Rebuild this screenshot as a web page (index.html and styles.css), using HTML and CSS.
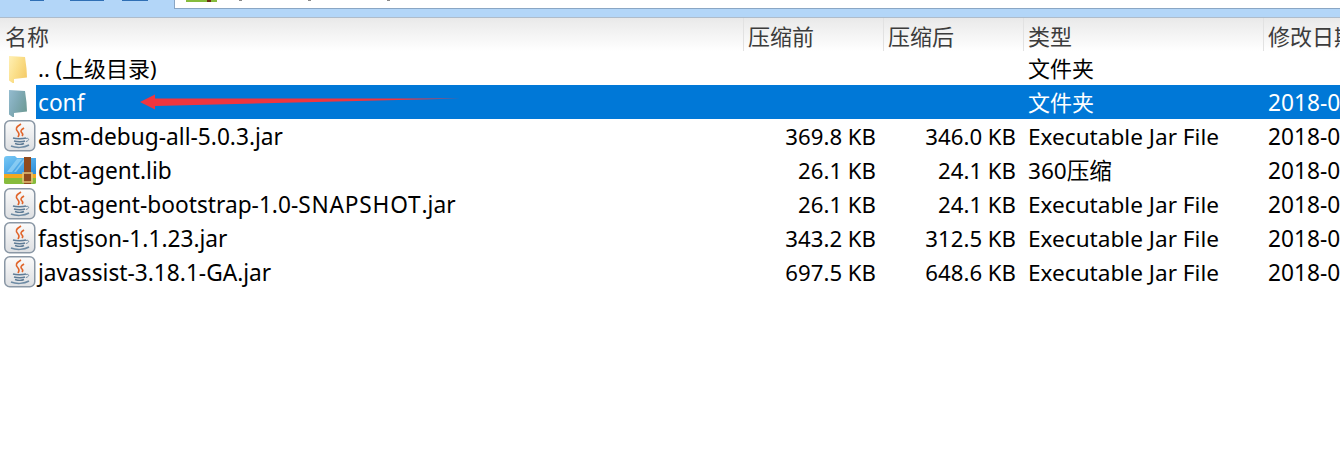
FILE: index.html
```html
<!DOCTYPE html>
<html lang="zh">
<head>
    <meta charset="UTF-8">
    <title>文件列表</title>
    <link rel="stylesheet" href="styles.css">
</head>
<body>
    <svg class="defs" width="0" height="0">
        <defs>
            <linearGradient id="folder-yellow" x1="0" y1="0" x2="1" y2="0.6">
                <stop offset="0" stop-color="#fff0b5"/>
                <stop offset="0.5" stop-color="#fbe08c"/>
                <stop offset="1" stop-color="#f5cd6c"/>
            </linearGradient>
            <linearGradient id="folder-teal" x1="0" y1="0" x2="1" y2="0.6">
                <stop offset="0" stop-color="#94bcd0"/>
                <stop offset="0.5" stop-color="#80aab6"/>
                <stop offset="1" stop-color="#6f9c98"/>
            </linearGradient>
            <linearGradient id="jar-bg" x1="0" y1="0" x2="0" y2="1">
                <stop offset="0" stop-color="#fbfbfb"/>
                <stop offset="1" stop-color="#dddfe2"/>
            </linearGradient>
            <linearGradient id="zip-blue" x1="0" y1="0" x2="1" y2="1">
                <stop offset="0" stop-color="#77c8f5"/>
                <stop offset="1" stop-color="#2b8ddb"/>
            </linearGradient>
            <symbol id="jar" viewBox="0 0 32 32">
                <rect x="0.75" y="0.75" width="30" height="30" rx="5" fill="url(#jar-bg)" stroke="#8a97a5" stroke-width="1.5"/>
                <path d="M17 4c-5 3-6 5-3 8 2 2 1 3 0 5M20 8c-3 2-4 3-2 5 1 1 1 2 0 3" fill="none" stroke="#e0642a" stroke-width="1.6"/>
                <path d="M9 18c3 1 10 1 13 0M10 21c3 1 9 1 11 0M11 23.500c3 1 7 1 9 0" fill="none" stroke="#5f7c96" stroke-width="1.4"/>
                <path d="M7 26c5 2 13 2 18-1" fill="none" stroke="#6d8aa3" stroke-width="1.500"/>
                <path d="M22 18.500c3-1 4 2 0 3" fill="none" stroke="#6d8aa3" stroke-width="1"/>
            </symbol>
            <symbol id="folder" viewBox="0 0 18 27">
                <path d="M0 0l16 1 1.500 11.500.5 9-13 1.500v5l-5-3.500z"/>
            </symbol>
        </defs>
    </svg>

    <div class="toolbar">
        <div class="toolbar-tools">
            <span class="tool tool-a"></span>
            <span class="tool tool-b"></span>
            <span class="tool tool-c"></span>
        </div>
        <div class="path-box">
            <span class="path-icon"></span>
            <span class="path-mark mark-a"></span>
            <span class="path-mark mark-b"></span>
            <span class="path-mark mark-c"></span>
        </div>
    </div>

    <div class="file-list">
        <div class="row head">
            <div class="cell">名称</div>
            <div class="cell">压缩前</div>
            <div class="cell">压缩后</div>
            <div class="cell">类型</div>
            <div class="cell">修改日期</div>
        </div>

        <div class="row">
            <div class="cell name">
                <svg class="icon-folder" fill="url(#folder-yellow)"><use href="#folder"/></svg>
                <span class="label parent">.. (上级目录)</span>
            </div>
            <div class="cell"></div>
            <div class="cell"></div>
            <div class="cell type cjk">文件夹</div>
            <div class="cell date"></div>
        </div>

        <div class="row selected">
            <div class="cell name">
                <svg class="icon-folder" fill="url(#folder-teal)"><use href="#folder"/></svg>
                <span class="label">conf</span>
                <svg class="arrow" width="322" height="18" viewBox="0 0 322 18">
                    <path d="M0 9L15 1.500v4L320 5.500 15 13v3.500z" fill="#f0353f"/>
                </svg>
            </div>
            <div class="cell"></div>
            <div class="cell"></div>
            <div class="cell type cjk">文件夹</div>
            <div class="cell date">2018-06-12</div>
        </div>

        <div class="row">
            <div class="cell name">
                <svg class="icon"><use href="#jar"/></svg>
                <span class="label">asm-debug-all-5.0.3.jar</span>
            </div>
            <div class="cell size">369.8 KB</div>
            <div class="cell size">346.0 KB</div>
            <div class="cell type">Executable Jar File</div>
            <div class="cell date">2018-06-12</div>
        </div>

        <div class="row">
            <div class="cell name">
                <svg class="icon" viewBox="0 0 32 32">
                    <path d="M0 5q0-3 3-3h8l2 2h19v16H0z" fill="url(#zip-blue)"/>
                    <path d="M3 18L13 5h5L8 18zM10 18L20 5h2L12 18z" fill="#a5dcf8" opacity="0.6"/>
                    <rect y="20" width="32" height="4" fill="#f3a81f"/>
                    <path d="M0 24h32v5q0 1-2 1H2q-2 0-2-1z" fill="#86bb3c"/>
                    <rect x="20" y="3" width="7" height="27" fill="#8f4a1e"/>
                    <rect x="19" y="19" width="9" height="9" fill="none" stroke="#e3c27a" stroke-width="1.500"/>
                </svg>
                <span class="label">cbt-agent.lib</span>
            </div>
            <div class="cell size">26.1 KB</div>
            <div class="cell size">24.1 KB</div>
            <div class="cell type">360压缩</div>
            <div class="cell date">2018-06-12</div>
        </div>

        <div class="row">
            <div class="cell name">
                <svg class="icon"><use href="#jar"/></svg>
                <span class="label">cbt-agent-bootstrap-1.0-<span class="caps">SNAPSHOT</span>.jar</span>
            </div>
            <div class="cell size">26.1 KB</div>
            <div class="cell size">24.1 KB</div>
            <div class="cell type">Executable Jar File</div>
            <div class="cell date">2018-06-12</div>
        </div>

        <div class="row">
            <div class="cell name">
                <svg class="icon"><use href="#jar"/></svg>
                <span class="label">fastjson-1.1.23.jar</span>
            </div>
            <div class="cell size">343.2 KB</div>
            <div class="cell size">312.5 KB</div>
            <div class="cell type">Executable Jar File</div>
            <div class="cell date">2018-06-12</div>
        </div>

        <div class="row">
            <div class="cell name">
                <svg class="icon"><use href="#jar"/></svg>
                <span class="label">javassist-3.18.1-GA.jar</span>
            </div>
            <div class="cell size">697.5 KB</div>
            <div class="cell size">648.6 KB</div>
            <div class="cell type">Executable Jar File</div>
            <div class="cell date">2018-06-12</div>
        </div>
    </div>
</body>
</html>
```

FILE: styles.css
```css
html, body {
    margin: 0;
    padding: 0;
    background: #fff;
    overflow: hidden;
}

body {
    font-family: "Noto Sans", "Noto Sans CJK SC", sans-serif;
    font-size: 22px;
    color: #000;
    width: 1340px;
    height: 452px;
}

.defs {
    position: absolute;
}

.toolbar {
    display: flex;
    height: 18px;
    background: #b3d6f8;
    border-bottom: 1px solid #aebccb;
    box-sizing: border-box;
}

.toolbar-tools {
    width: 174px;
    display: flex;
    align-items: flex-start;
    box-sizing: border-box;
    padding-left: 30px;
}

.tool {
    height: 1px;
    background: #2f6fb5;
}

.tool-a { width: 14px; margin-right: 26px; }
.tool-b { width: 34px; margin-right: 18px; }
.tool-c { width: 26px; }

.path-box {
    flex: 1;
    display: flex;
    align-items: flex-start;
    height: 8px;
    background: #fff;
    border: 1px solid #8aa6c4;
    border-top: 0;
    border-right: 0;
    padding-left: 11px;
}

.path-icon {
    width: 31px;
    height: 2px;
    background: linear-gradient(to right, #86bb3c 68%, #6b2d10 68%, #6b2d10 80%, #86bb3c 80%);
}

.path-mark {
    width: 3px;
    height: 1px;
    background: #8a8a8a;
}

.mark-a { margin-left: 22px; }
.mark-b { margin-left: 66px; }
.mark-c { margin-left: 76px; }

.row {
    display: grid;
    grid-template-columns: 743px 140px 140px 240px 1fr;
    height: 34px;
    line-height: 36px;
}

.head {
    height: 33px;
    line-height: 37px;
    color: #3c3c3c;
    background: linear-gradient(#e9e9e9, #fff);
}

.head .cell {
    padding-left: 4px;
    border-left: 1px solid #e2e2e2;
    box-sizing: border-box;
}

.head .cell:first-child {
    padding-left: 5px;
    border-left: 0;
}

.cell {
    white-space: nowrap;
    overflow: hidden;
    min-width: 0;
}

.name {
    display: flex;
    align-items: center;
    position: relative;
    padding-left: 4px;
    overflow: visible;
}

.icon {
    width: 32px;
    height: 32px;
    flex: none;
}

.icon-folder {
    width: 18px;
    height: 27px;
    margin: 3px 9px 0 5px;
    flex: none;
}

.label {
    font-size: 22.7px;
    height: 34px;
    flex: 1;
    padding-left: 2px;
}

.label.parent {
    font-size: 22px;
    line-height: 34px;
}

.caps {
    letter-spacing: 0.8px;
}

.size {
    font-size: 22.2px;
    text-align: right;
    padding-right: 7px;
}

.type {
    font-size: 22.6px;
    padding-left: 5px;
}

.type.cjk {
    font-size: 22px;
    line-height: 34px;
}

.date {
    font-size: 22.7px;
    padding-left: 5px;
}

.selected .cell {
    background: #0078d7;
    color: #fff;
}

.selected .name {
    background: #fff;
}

.selected .label {
    background: #0078d7;
    color: #fff;
}

.arrow {
    position: absolute;
    left: 140px;
    top: 8px;
}
```
